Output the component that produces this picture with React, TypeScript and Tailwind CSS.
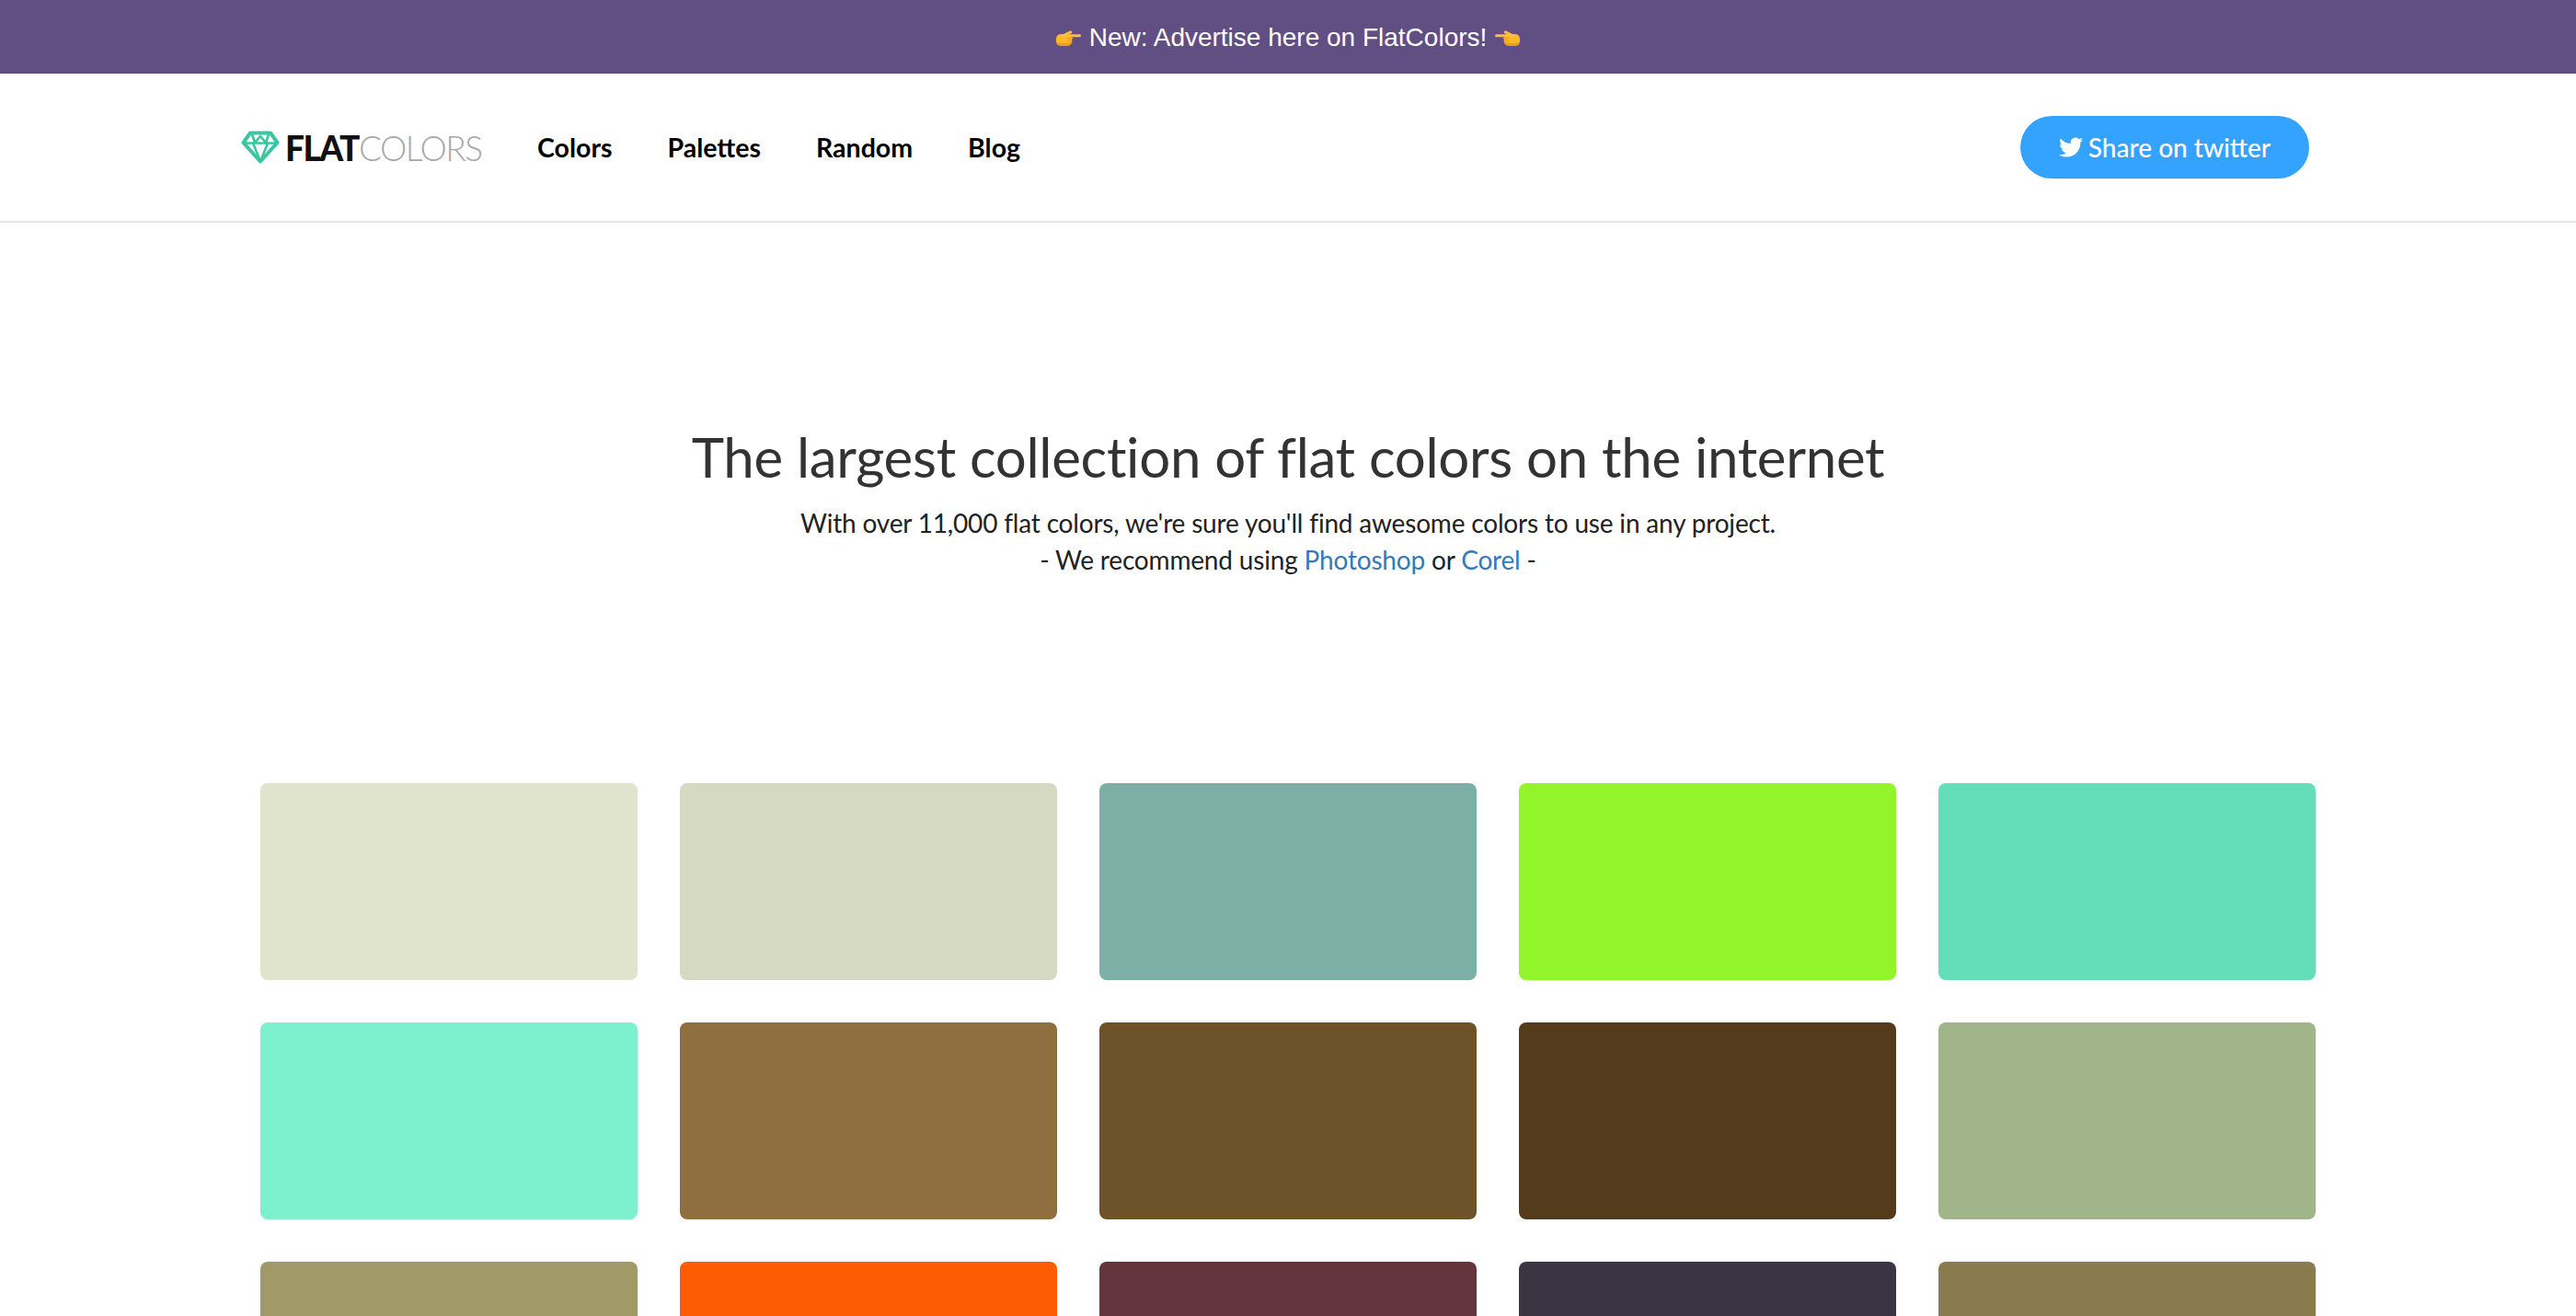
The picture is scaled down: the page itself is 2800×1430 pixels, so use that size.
import React from 'react';
import { FaTwitter } from 'react-icons/fa';

const swatches = [
    '#e0e4cc', '#d6d9c1', '#7cb0a6', '#92f42a', '#64deb9',
    '#7df0cd', '#8f6f3f', '#6d522a', '#533b1c', '#a1b58b',
    '#a19a68', '#fe5c03', '#63353c', '#3b3443', '#8a7b4e',
];

const navLinks = ['Colors', 'Palettes', 'Random', 'Blog'];

const PointingHand: React.FC<{ flip?: boolean }> = ({ flip }) => (
    <svg
        viewBox="0 0 27 17"
        className={`w-[27px] h-[17px] mt-[2px] ${flip ? '-scale-x-100' : ''}`}
    >
        <rect x="0" y="4" width="17" height="13" rx="5" fill="#fbb82c" />
        <path d="M3 6.500L15 .6c2-.8 3 1.400 1.500 2.400L8 8.500z" fill="#fdc03a" />
        <rect x="12" y="4.300" width="15" height="3" rx="1.500" fill="#fdbf35" />
        <rect x="12" y="7" width="6" height="3" rx="1.500" fill="#f6a821" />
        <rect x="12" y="10" width="5.500" height="3" rx="1.500" fill="#f6a821" />
        <path d="M1 13c1 2.500 3 4 6 4h4c3 0 5-1.500 6-4-5 1.500-11 1.500-16 0z" fill="#ee9a1c" />
    </svg>
);

const DiamondLogo: React.FC = () => (
    <svg viewBox="0 0 42 36" className="w-[42px] h-[36px]" fill="none" stroke="#38c6a4" strokeWidth="4" strokeLinejoin="round">
        <path d="M10 2.500h22l7.500 10.500L21 33.500 2.500 13z" />
        <path d="M2.500 13.500h37M13 13.500l8 20 8-20M12 4l3 9 6-7 6 7 3-9" strokeWidth="2.600" />
    </svg>
);

export default function App() {
    return (
        <div className="h-screen overflow-hidden bg-white font-['Lato',sans-serif]">
            <div className="h-[80px] pt-[1px] bg-[#614f84] flex items-center justify-center gap-[9px] text-white text-[28px] font-['Liberation_Sans',sans-serif]">
                <PointingHand />
                <span>New: Advertise here on FlatColors!</span>
                <PointingHand flip />
            </div>

            <header className="h-[162px] border-b-2 border-[#e5e5e5] pl-[262px] pr-[290px] flex items-center justify-between">
                <div className="flex items-center">
                    <a className="flex items-center gap-[6px] w-[322px]">
                        <DiamondLogo />
                        <span className="text-[37px] leading-none tracking-[-1.500px]">
                            <span className="font-black text-[#111]">FLAT</span>
                            <span className="font-light text-[#a8a8a8]">COLORS</span>
                        </span>
                    </a>
                    <nav className="flex items-center gap-[60px] text-[28.500px] font-bold text-black">
                        {navLinks.map((link) => (
                            <a key={link}>{link}</a>
                        ))}
                    </nav>
                </div>
                <a className="h-[68px] w-[314px] rounded-full bg-[#33a3ff] text-white text-[28px] font-medium flex items-center justify-center gap-[6px]">
                    <FaTwitter size={26} />
                    <span>Share on twitter</span>
                </a>
            </header>

            <section className="pt-[221px] text-center">
                <h1 className="text-[60px] leading-[66px] tracking-[-0.300px] text-[#333]">The largest collection of flat colors on the internet</h1>
                <p className="mt-[19px] text-[28px] leading-[40px] tracking-[-0.180px] text-[#222]">
                    With over 11,000 flat colors, we're sure you'll find awesome colors to use in any project.
                    <br />
                    - We recommend using <a className="text-[#337ab7]">Photoshop</a> or <a className="text-[#337ab7]">Corel</a> -
                </p>
            </section>

            <div className="mt-[223px] mx-auto w-[2234px] grid grid-cols-5 gap-[46px]">
                {swatches.map((color) => (
                    <div
                        key={color}
                        className="h-[214px] rounded-[8px]"
                        style={{ backgroundColor: color }}
                    />
                ))}
            </div>
        </div>
    );
}
